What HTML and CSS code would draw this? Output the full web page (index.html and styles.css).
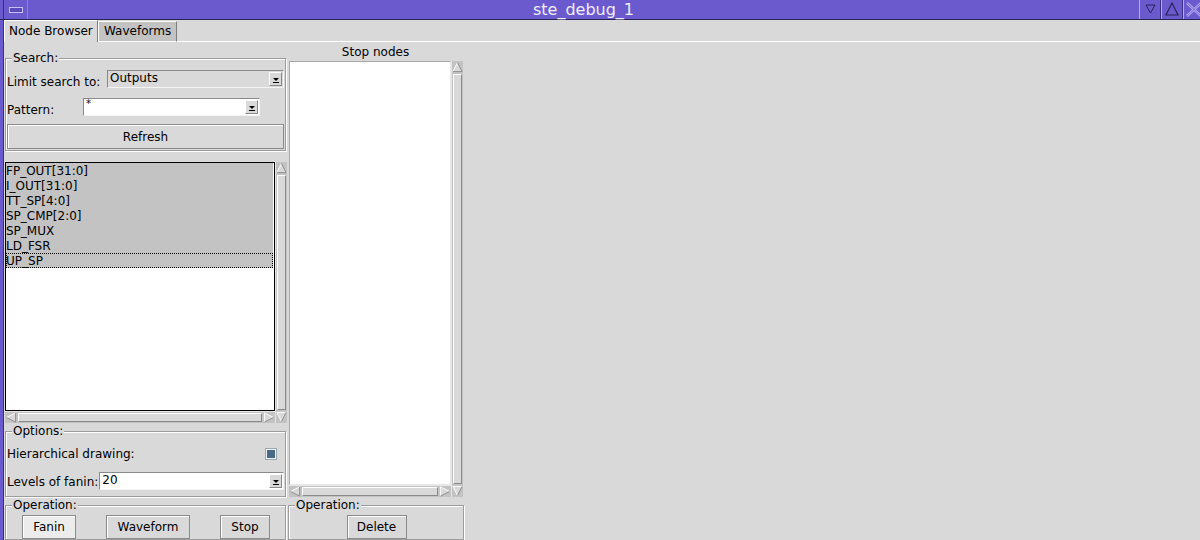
FILE: index.html
```html
<!DOCTYPE html>
<html>
<head>
<meta charset="utf-8">
<title>ste_debug_1</title>
<link rel="stylesheet" href="styles.css">
</head>
<body>
<div class="app">
  <header class="titlebar">
    <div class="tb-menu"><span class="menu-glyph"></span></div>
    <div class="tb-title">ste_debug_1</div>
    <div class="tb-btn"><svg width="20" height="19" viewBox="0 0 20 19"><polygon points="6,5 15,5 10.5,13" fill="none" stroke="#2a2358" stroke-width="1"/></svg></div>
    <div class="tb-btn"><svg width="20" height="19" viewBox="0 0 20 19"><polygon points="10,3 16,15 4,15" fill="none" stroke="#2a2358" stroke-width="1.2"/></svg></div>
    <div class="tb-btn"><svg width="20" height="19" viewBox="0 0 20 19"><path d="M3,3 L17,16 M17,3 L3,16" stroke="#b4aaf0" stroke-width="2.5" fill="none"/><path d="M3,3 L17,16 M17,3 L3,16" stroke="#6a5acd" stroke-width="0.8" fill="none"/></svg></div>
  </header>
  <div class="frame">
    <div class="tabs">
      <div class="tab active">Node Browser</div>
      <div class="tab">Waveforms</div>
      <div class="tab-fill"></div>
    </div>
    <div class="pane">
      <div class="col-left">
        <fieldset class="group search">
          <legend>Search:</legend>
          <div class="row">
            <span class="lbl">Limit search to:</span>
            <div class="combo readonly w177">
              <span class="val">Outputs</span>
              <span class="drop"><svg width="8" height="6" viewBox="0 0 8 6"><polygon points="1,1 7,1 4,4" fill="#000"/><line x1="1" y1="5.5" x2="7" y2="5.5" stroke="#000"/></svg></span>
            </div>
          </div>
          <div class="row gap10">
            <span class="lbl w76">Pattern:</span>
            <div class="combo w177">
              <span class="val small">*</span>
              <span class="drop"><svg width="8" height="6" viewBox="0 0 8 6"><polygon points="1,1 7,1 4,4" fill="#000"/><line x1="1" y1="5.5" x2="7" y2="5.5" stroke="#000"/></svg></span>
            </div>
          </div>
          <button class="btn refresh">Refresh</button>
        </fieldset>

        <div class="lb-grid left-grid">
          <div class="listbox focus">
            <div class="item sel">FP_OUT[31:0]</div>
            <div class="item sel">I_OUT[31:0]</div>
            <div class="item sel">TT_SP[4:0]</div>
            <div class="item sel">SP_CMP[2:0]</div>
            <div class="item sel">SP_MUX</div>
            <div class="item sel">LD_FSR</div>
            <div class="item sel active">UP_SP</div>
          </div>
          <div class="vscroll">
            <svg class="arrow" width="12" height="12" viewBox="0 0 12 12"><polygon points="6,1 11,11 1,11" fill="#d9d9d9"/><path d="M1,11 L6,1" stroke="#fff" fill="none"/><path d="M6,1 L11,11 L1,11" stroke="#8a8a8a" fill="none"/></svg>
            <div class="thumb"></div>
            <svg class="arrow" width="12" height="12" viewBox="0 0 12 12"><polygon points="1,1 11,1 6,11" fill="#d9d9d9"/><path d="M6,11 L1,1 L11,1" stroke="#fff" fill="none"/><path d="M11,1 L6,11" stroke="#8a8a8a" fill="none"/></svg>
          </div>
          <div class="hscroll">
            <svg class="arrow" width="12" height="12" viewBox="0 0 12 12"><polygon points="1,6 11,1 11,11" fill="#d9d9d9"/><path d="M1,6 L11,1" stroke="#fff" fill="none"/><path d="M11,1 L11,11 L1,6" stroke="#8a8a8a" fill="none"/></svg>
            <div class="thumb"></div>
            <svg class="arrow" width="12" height="12" viewBox="0 0 12 12"><polygon points="11,6 1,1 1,11" fill="#d9d9d9"/><path d="M1,11 L1,1 L11,6" stroke="#fff" fill="none"/><path d="M11,6 L1,11" stroke="#8a8a8a" fill="none"/></svg>
          </div>
        </div>

        <fieldset class="group options">
          <legend>Options:</legend>
          <div class="row">
            <span class="lbl">Hierarchical drawing:</span>
            <span class="check"></span>
          </div>
          <div class="row gap10">
            <span class="lbl">Levels of fanin:</span>
            <div class="combo grow">
              <span class="val">20</span>
              <span class="drop"><svg width="8" height="6" viewBox="0 0 8 6"><polygon points="1,1 7,1 4,4" fill="#000"/><line x1="1" y1="5.5" x2="7" y2="5.5" stroke="#000"/></svg></span>
            </div>
          </div>
        </fieldset>

        <fieldset class="group operation">
          <legend>Operation:</legend>
          <div class="btn-row spread">
            <button class="btn hot w54">Fanin</button>
            <button class="btn w84">Waveform</button>
            <button class="btn w50">Stop</button>
          </div>
        </fieldset>
      </div>

      <div class="col-mid">
        <div class="caption">Stop nodes</div>
        <div class="lb-grid mid-grid">
          <div class="listbox plain"></div>
          <div class="vscroll">
            <svg class="arrow" width="12" height="12" viewBox="0 0 12 12"><polygon points="6,1 11,11 1,11" fill="#d9d9d9"/><path d="M1,11 L6,1" stroke="#fff" fill="none"/><path d="M6,1 L11,11 L1,11" stroke="#8a8a8a" fill="none"/></svg>
            <div class="thumb"></div>
            <svg class="arrow" width="12" height="12" viewBox="0 0 12 12"><polygon points="1,1 11,1 6,11" fill="#d9d9d9"/><path d="M6,11 L1,1 L11,1" stroke="#fff" fill="none"/><path d="M11,1 L6,11" stroke="#8a8a8a" fill="none"/></svg>
          </div>
          <div class="hscroll">
            <svg class="arrow" width="12" height="12" viewBox="0 0 12 12"><polygon points="1,6 11,1 11,11" fill="#d9d9d9"/><path d="M1,6 L11,1" stroke="#fff" fill="none"/><path d="M11,1 L11,11 L1,6" stroke="#8a8a8a" fill="none"/></svg>
            <div class="thumb"></div>
            <svg class="arrow" width="12" height="12" viewBox="0 0 12 12"><polygon points="11,6 1,1 1,11" fill="#d9d9d9"/><path d="M1,11 L1,1 L11,6" stroke="#fff" fill="none"/><path d="M11,6 L1,11" stroke="#8a8a8a" fill="none"/></svg>
          </div>
        </div>
        <fieldset class="group operation mid-op">
          <legend>Operation:</legend>
          <div class="btn-row center">
            <button class="btn w60">Delete</button>
          </div>
        </fieldset>
      </div>
    </div>
  </div>
</div>
</body>
</html>
```
FILE: styles.css
```css
* { box-sizing: border-box; }
html, body { margin: 0; padding: 0; }
body {
  background: #d9d9d9;
  font: 12px "DejaVu Sans", sans-serif;
  color: #000;
  overflow: hidden;
  width: 1200px;
  height: 540px;
}
.app {
  width: 1205px;
  height: 540px;
  display: flex;
  flex-direction: column;
}

/* title bar */
.titlebar {
  height: 20px;
  flex: none;
  background: #6a5acd;
  border-bottom: 1px solid #2a2358;
  display: flex;
}
.tb-menu {
  width: 25px;
  margin-left: 3px;
  border-left: 1px solid #3a2f88;
  border-right: 1px solid #8d80e0;
  display: flex;
  align-items: center;
  justify-content: center;
}
.menu-glyph {
  width: 14px;
  height: 6px;
  border: 1px solid #c8c0f4;
  background: #5a4bbd;
}
.tb-title {
  flex: 1;
  text-align: center;
  color: #f0eeff;
  font-size: 16px;
  line-height: 19px;
}
.tb-btn {
  width: 22px;
  border-left: 1px solid #b4aaf0;
  border-right: 1px solid #3a2f88;
  display: flex;
  align-items: center;
  justify-content: center;
}

/* frame */
.frame {
  flex: 1;
  border-left: 3px solid #6a5acd;
  display: flex;
  flex-direction: column;
  box-shadow: inset 1px 0 0 #3b3468;
  padding-left: 1px;
}
.tabs {
  height: 22px;
  display: flex;
  flex: none;
}
.tab {
  height: 21px;
  margin-top: 1px;
  width: 79px;
  padding-left: 5px;
  line-height: 19px;
  background: #c3c3c3;
  border-top: 1px solid #fff;
  border-left: 1px solid #fff;
  border-right: 1px solid #7f7f7f;
  border-bottom: 1px solid #fff;
}
.tab.active {
  height: 22px;
  margin-top: 0;
  width: 94px;
  background: #d9d9d9;
  border-bottom: none;
  line-height: 21px;
  padding-left: 4px;
}
.tab-fill {
  flex: 1;
  border-bottom: 1px solid #fff;
}
.pane {
  flex: 1;
  display: flex;
  min-height: 0;
}

/* columns */
.col-left {
  width: 283px;
  padding-left: 1px;
  display: flex;
  flex-direction: column;
}
.col-mid {
  width: 177px;
  display: flex;
  flex-direction: column;
}

/* group frames */
.group {
  margin: 0;
  padding: 0 0 0 1px;
  border: 1px solid #9c9c9c;
  box-shadow: inset 1px 1px 0 #fff, 1px 1px 0 #fff;
  min-width: 0;
}
.group legend {
  margin-left: 5px;
  padding: 0 1px;
  line-height: 14px;
  background: #d9d9d9;
}
.search {
  width: 281px;
  margin-top: 9px;
  padding-top: 5px;
  padding-bottom: 1px;
}
.options {
  width: 281px;
  margin-top: 1px;
  padding-top: 6px;
  padding-bottom: 6px;
}
.operation {
  width: 281px;
  margin-top: 1px;
  flex: 1;
}
.mid-op {
  width: 176px;
  margin-left: 1px;
}

.row {
  display: flex;
  align-items: center;
  height: 18px;
}
.gap10 { margin-top: 10px; }
.lbl { white-space: nowrap; flex: none; }
.search .lbl { padding-top: 6px; }
.options .lbl { padding-top: 2px; }
.w76 { width: 76px; }

/* combo */
.combo {
  height: 18px;
  display: flex;
  background: #fff;
  border: 1px solid;
  border-color: #8a8a8a #f4f4f4 #f4f4f4 #8a8a8a;
  margin-left: auto;
  margin-right: 1px;
}
.combo.readonly { background: #d9d9d9; }
.w177 { width: 177px; }
.row .combo.grow { flex: 1; margin-left: 1px; }
.search .row:nth-of-type(2) .combo { margin-left: 0; }
.combo .val {
  flex: 1;
  padding-left: 2px;
  line-height: 15px;
}
.combo .val.small { font-size: 10px; line-height: 10px; }
.combo .drop {
  width: 13px;
  margin: 1px;
  border: 1px solid;
  border-color: #fff #8a8a8a #8a8a8a #fff;
  background: #d9d9d9;
  display: flex;
  align-items: center;
  justify-content: center;
  padding-top: 2px;
}

/* buttons */
.btn {
  font: inherit;
  color: #000;
  height: 24px;
  padding: 0;
  background: #d9d9d9;
  border: 1px solid #8b8b8b;
  box-shadow: inset 1px 1px 0 #fff;
  border-radius: 0;
}
.btn.hot { background: #ececec; }
.refresh {
  display: block;
  width: 277px;
  height: 25px;
  margin-top: 8px;
}
.btn-row {
  display: flex;
  margin-top: 3px;
}
.btn-row.spread { justify-content: space-around; }
.btn-row.center { justify-content: center; }
.w54 { width: 54px; }
.w84 { width: 84px; }
.w50 { width: 50px; }
.w60 { width: 60px; }

/* check */
.check {
  width: 10px;
  height: 10px;
  margin-left: auto;
  margin-right: 9px;
  margin-top: 1px;
  background: #4a6984;
  border: 1px solid #eef2f6;
  outline: 1px solid #9aa8b4;
}

/* listbox grids */
.lb-grid {
  display: grid;
}
.left-grid {
  margin-top: 11px;
  grid-template-columns: 270px 12px;
  grid-template-rows: 249px 12px;
}
.mid-grid {
  margin-left: 2px;
  grid-template-columns: 162px 12px;
  grid-template-rows: 424px 12px;
}
.caption {
  height: 19px;
  padding-top: 2px;
  line-height: 16px;
  text-align: center;
  flex: none;
}
.listbox {
  background: #fff;
  overflow: hidden;
}
.listbox.focus { border: 1px solid #000; }
.listbox.plain {
  border: 1px solid;
  border-color: #a8a8a8 #e8e8e8 #e8e8e8 #a8a8a8;
}
.item {
  height: 15px;
  padding-top: 2px;
  line-height: 13px;
  white-space: nowrap;
}
.item.sel { background: #c3c3c3; margin-right: 1px; }
.item.active { outline: 1px dotted #000; outline-offset: -1px; }

.vscroll {
  grid-row: 1 / 3;
  grid-column: 2;
  display: flex;
  flex-direction: column;
  background: #c3c3c3;
  border-left: 1px solid #e6e6e6;
}
.hscroll {
  grid-row: 2;
  grid-column: 1;
  display: flex;
  background: #c3c3c3;
  border-top: 1px solid #e6e6e6;
}
.arrow { flex: none; display: block; }
.vscroll .arrow { width: 11px; height: 12px; }
.hscroll .arrow { width: 12px; height: 11px; }
.thumb {
  flex: 1;
  background: #d9d9d9;
  border: 1px solid;
  border-color: #fff #8a8a8a #8a8a8a #fff;
  margin: 1px;
}
```
